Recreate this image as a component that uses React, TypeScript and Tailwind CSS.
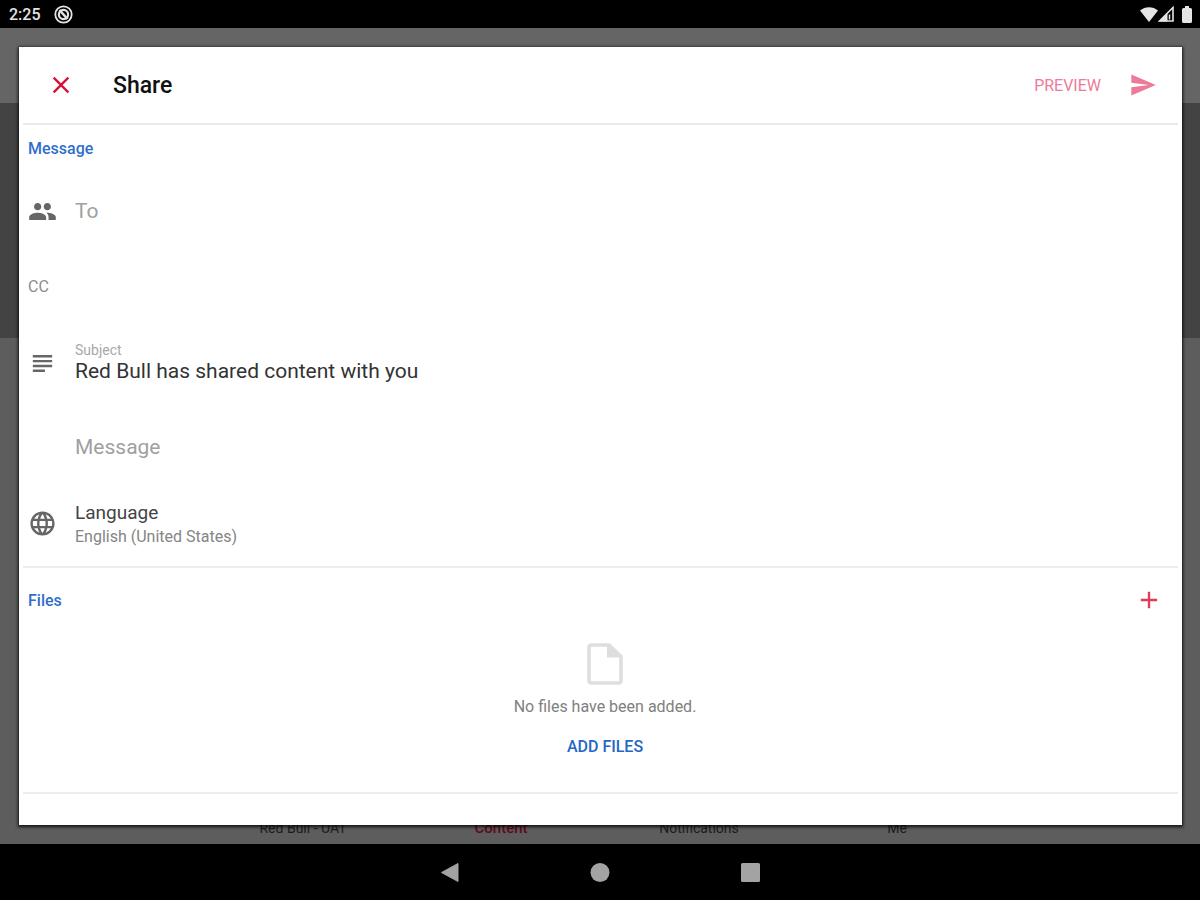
import type { ReactNode } from "react";
import { MdAdd, MdClose, MdLanguage, MdPeople, MdSend, MdSubject } from "react-icons/md";

const tabs = [
  { label: "Red Bull - UAT", active: false },
  { label: "Content", active: true },
  { label: "Notifications", active: false },
  { label: "Me", active: false },
];

function StatusBar() {
  return (
    <header className="flex h-7 items-center justify-between bg-black pl-[9px] pr-2 text-[#e4e4e4]">
      <div className="flex items-center gap-3">
        <span className="pt-0.5 text-base font-medium">2:25</span>
        <svg viewBox="0 0 20 20" className="size-5" fill="none" stroke="currentColor" aria-hidden="true">
          <circle cx="10.500" cy="10.500" r="8.2" strokeWidth="1.8" />
          <circle cx="10.500" cy="10.500" r="4.6" strokeWidth="2.2" />
          <path d="M6.500 6 14.500 15" strokeWidth="2.6" />
        </svg>
      </div>
      <div className="flex items-center gap-1">
        <svg viewBox="0 0 18 16" className="h-4 w-[18px]" fill="currentColor" aria-hidden="true">
          <path d="M0 4.500C5 0 13 0 18 4.500L9 16z" />
        </svg>
        <svg viewBox="0 0 16 16" className="-ml-1 size-4" aria-hidden="true">
          <path d="M1.500 15 15 1.500V15z" fill="none" stroke="currentColor" strokeWidth="1.600" />
          <path d="M1 15.500 9.500 7v8.500z" fill="currentColor" />
          <path d="M11.500 8.500v5" stroke="currentColor" strokeWidth="1.500" />
        </svg>
        <svg viewBox="0 0 10 17" className="ml-1 h-[17px] w-2.5" fill="currentColor" aria-hidden="true">
          <path d="M3 0h4v2h1.500Q10 2 10 3.500v12Q10 17 8.500 17h-7Q0 17 0 15.500v-12Q0 2 1.500 2H3z" />
        </svg>
      </div>
    </header>
  );
}

function Backdrop() {
  return (
    <div className="col-start-1 row-start-1 flex flex-col bg-[#5d5d5d]" aria-hidden="true">
      <div className="h-[75px] bg-[#656565]" />
      <div className="h-[235px] bg-[#434343]" />
      <div className="mx-auto mt-auto grid w-[66%] grid-cols-4 pb-2 text-center text-sm leading-4 text-[#1c1c1c]">
        {tabs.map((tab) => (
          <span key={tab.label} className={tab.active ? "text-[15px] font-medium text-[#5c0a1c]" : ""}>
            {tab.label}
          </span>
        ))}
      </div>
    </div>
  );
}

function Row({ icon, children }: { icon?: ReactNode; children: ReactNode }) {
  return (
    <div className="flex h-[76px] items-center">
      <span className="w-[47px] shrink-0 text-[29px] text-[#666666]">{icon}</span>
      {children}
    </div>
  );
}

const fieldClass =
  "w-full min-w-0 bg-transparent text-[21px] leading-[26px] text-[#333333] outline-none placeholder:text-[#a0a0a0]";

function ShareDialog() {
  return (
    <section
      role="dialog"
      aria-labelledby="share-title"
      className="z-10 col-start-1 row-start-1 mb-[19px] ml-[19px] mr-[18px] mt-[19px] bg-white pb-[31px] shadow-[0_1px_3px_1px_rgba(0,0,0,0.8)]"
    >
      <div className="mx-1 flex h-[78px] items-center border-b-2 border-[#e9e9e9] pl-6 pr-[21px]">
        <button type="button" aria-label="Close" className="text-[28px] text-[#dc0f37]">
          <MdClose />
        </button>
        <h1 id="share-title" className="ml-[38px] pt-0.5 text-[23px] font-medium text-[#111111]">
          Share
        </h1>
        <button type="button" className="ml-auto pt-0.5 text-base text-[#ec7b9a]">
          PREVIEW
        </button>
        <button type="button" aria-label="Send" className="ml-7 text-[28px] text-[#ec7b9a]">
          <MdSend />
        </button>
      </div>

      <div className="pl-[9px]">
        <h2 className="flex h-12 items-center text-base font-medium text-[#2f6fcb]">Message</h2>
        <Row icon={<MdPeople />}>
          <input aria-label="To" placeholder="To" className={fieldClass} />
        </Row>
        <div className="flex h-[76px] items-center">
          <label htmlFor="cc" className="w-[47px] shrink-0 text-base text-[#8c8c8c]">
            CC
          </label>
          <input id="cc" className={fieldClass} />
        </div>
        <Row icon={<MdSubject />}>
          <div className="flex grow flex-col">
            <label htmlFor="subject" className="text-sm leading-4 text-[#a8a8a8]">
              Subject
            </label>
            <input id="subject" defaultValue="Red Bull has shared content with you" className={fieldClass} />
          </div>
        </Row>
        <div className="pt-2">
          <Row>
            <input aria-label="Message" placeholder="Message" className={fieldClass} />
          </Row>
        </div>
        <Row icon={<MdLanguage />}>
          <button type="button" className="flex grow flex-col pt-1 text-left leading-6">
            <span className="text-[19px] leading-6 text-[#444444]">Language</span>
            <span className="text-base leading-6 text-[#858585]">English (United States)</span>
          </button>
        </Row>
      </div>

      <div className="mx-1 mt-[5px] border-y-2 border-[#ededed] pl-[5px]">
        <div className="flex h-16 items-center justify-between pr-[15px]">
          <h2 className="pt-0.5 text-base font-medium text-[#2f6fcb]">Files</h2>
          <button type="button" aria-label="Add file" className="text-[28px] text-[#e23a59]">
            <MdAdd />
          </button>
        </div>
        <div className="flex flex-col items-center pb-[27px] pl-1 pt-[11px]">
          <svg viewBox="0 0 36 42" className="h-[42px] w-9" aria-hidden="true">
            <path
              d="M4.500 2H22l12 11.500V37.500Q34 40 31.500 40h-27Q2 40 2 37.500v-33Q2 2 4.500 2z"
              fill="none"
              stroke="#dedede"
              strokeWidth="3.600"
            />
            <path d="M20 1.500V14.500H34.500z" fill="#dedede" />
          </svg>
          <p className="mt-2.5 text-base leading-6 text-[#808080]">No files have been added.</p>
          <button type="button" className="mt-2.5 h-9 text-base font-medium text-[#2467c4]">
            ADD FILES
          </button>
        </div>
      </div>
    </section>
  );
}

function NavigationBar() {
  return (
    <nav className="flex h-14 items-center justify-center gap-[122px] bg-black text-[#a3a3a3]">
      <button type="button" aria-label="Back">
        <svg viewBox="0 0 28 28" className="size-7" fill="currentColor">
          <path d="M5.500 14.500 22 5.500v18z" stroke="currentColor" strokeLinejoin="round" />
        </svg>
      </button>
      <button type="button" aria-label="Home">
        <svg viewBox="0 0 28 28" className="size-7" fill="currentColor">
          <circle cx="14" cy="14.500" r="9.500" />
        </svg>
      </button>
      <button type="button" aria-label="Overview">
        <svg viewBox="0 0 28 28" className="size-7" fill="currentColor">
          <rect x="5" y="5" width="19" height="19" rx="1.500" />
        </svg>
      </button>
    </nav>
  );
}

export default function App() {
  return (
    <div className="flex min-h-screen flex-col bg-black font-['Roboto',sans-serif]">
      <StatusBar />
      <main className="grid grow grid-cols-1">
        <Backdrop />
        <ShareDialog />
      </main>
      <NavigationBar />
    </div>
  );
}
